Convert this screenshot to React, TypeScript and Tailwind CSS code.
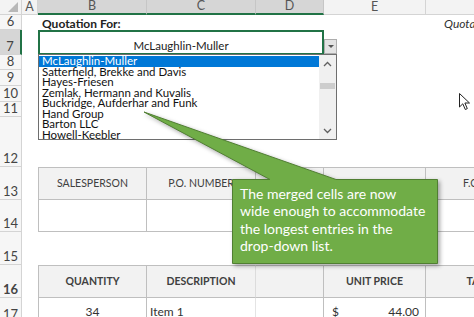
import React from 'react';

const font = { fontFamily: 'Lato, "Open Sans", sans-serif' };

const items = [
    'McLaughlin-Muller',
    'Satterfield, Brekke and Davis',
    'Hayes-Friesen',
    'Zemlak, Hermann and Kuvalis',
    'Buckridge, Aufderhar and Funk',
    'Hand Group',
    'Barton LLC',
    'Howell-Keebler',
];

function RowNum({ n, selected }: { n: string; selected?: boolean }) {
    return (
        <div
            className={`${selected
                ? 'bg-[#d6d6d6] border-r-2 border-r-[#217346]'
                : 'bg-[#f6f6f6] border-r border-r-[#d4d4d4]'
                } border-b border-b-[#d4d4d4] flex items-end justify-center text-[13px] leading-none pb-[1px] text-[#444]`}
        >
            {n}
        </div>
    );
}

export default function App() {
    return (
        <div className="relative w-[474px] h-[317px] overflow-hidden bg-white text-[#333]" style={font}>
            {/* column headers */}
            <div className="grid grid-cols-[22px_16px_109px_109px_68px_102px_102px] h-[15px] bg-[#f3f3f3] text-[12.5px] leading-none text-[#555]">
                <div className="border-r border-b border-[#d4d4d4] flex items-end justify-end pr-[3px] pb-[2px]">
                    <div className="w-0 h-0 border-l-[10px] border-l-transparent border-b-[10px] border-b-[#b8b8b8]" />
                </div>
                <div className="border-r border-b border-[#d4d4d4] flex items-center justify-center">A</div>
                <div className="border-r border-[#c6c6c6] border-b-2 border-b-[#217346] bg-[#d6d6d6] flex items-center justify-center">B</div>
                <div className="border-r border-[#c6c6c6] border-b-2 border-b-[#217346] bg-[#d6d6d6] flex items-center justify-center">C</div>
                <div className="border-r border-[#c6c6c6] border-b-2 border-b-[#217346] bg-[#d6d6d6] flex items-center justify-center">D</div>
                <div className="border-r border-b border-[#d4d4d4] flex items-center justify-center">E</div>
                <div className="border-r border-b border-[#d4d4d4]" />
            </div>

            {/* row 6 */}
            <div className="grid grid-cols-[22px_16px_109px_109px_68px_102px_102px] h-[15px]">
                <RowNum n="6" />
                <div />
                <div className="flex items-end pl-[4px] text-[12px] leading-none font-bold text-[#222] whitespace-nowrap">Quotation For:</div>
                <div />
                <div />
                <div />
                <div className="flex items-end pl-[18px] text-[12px] leading-none italic text-[#333] whitespace-nowrap">Quotation #</div>
            </div>

            {/* row 7 */}
            <div className="grid grid-cols-[22px_16px_109px_109px_68px_102px_102px] h-[25px]">
                <RowNum n="7" selected />
                <div />
                <div className="col-span-3 border-2 border-[#217346] flex items-end justify-center pb-[2px] text-[11.5px] leading-none text-[#222]">
                    McLaughlin-Muller
                </div>
                <div />
                <div />
            </div>

            {[
                ['8', 'h-[15px]'],
                ['9', 'h-[16px]'],
                ['10', 'h-[16px]'],
                ['11', 'h-[15px]'],
                ['12', 'h-[50px]'],
            ].map(([n, h]) => (
                <div key={n} className={`grid grid-cols-[22px_16px_109px_109px_68px_102px_102px] ${h}`}>
                    <RowNum n={n} />
                </div>
            ))}

            {/* row 13 - order info header */}
            <div className="grid grid-cols-[22px_16px_109px_109px_68px_102px_102px] h-[33px] text-[10.5px] text-[#404040]">
                <RowNum n="13" />
                <div />
                <div className="border border-[#bfbfbf] bg-[#f2f2f2] flex items-center justify-center">SALESPERSON</div>
                <div className="border-y border-r border-[#bfbfbf] bg-[#f2f2f2] flex items-center justify-center whitespace-nowrap">P.O. NUMBER</div>
                <div className="border-y border-r border-[#bfbfbf] bg-[#f2f2f2]" />
                <div className="border-y border-r border-[#bfbfbf] bg-[#f2f2f2]" />
                <div className="border-y border-r border-[#bfbfbf] bg-[#f2f2f2] flex items-center justify-center">F.O.B.</div>
            </div>

            {/* row 14 */}
            <div className="grid grid-cols-[22px_16px_109px_109px_68px_102px_102px] h-[32px]">
                <RowNum n="14" />
                <div />
                <div className="border-x border-b border-[#bfbfbf]" />
                <div className="border-r border-b border-[#bfbfbf]" />
                <div className="border-r border-b border-[#bfbfbf]" />
                <div className="border-r border-b border-[#bfbfbf]" />
                <div className="border-r border-b border-[#bfbfbf]" />
            </div>

            {/* row 15 */}
            <div className="grid grid-cols-[22px_16px_109px_109px_68px_102px_102px] h-[33px]">
                <RowNum n="15" />
            </div>

            {/* row 16 - items header */}
            <div className="grid grid-cols-[22px_16px_109px_109px_68px_102px_102px] h-[33px] text-[10.5px] font-bold text-[#404040]">
                <RowNum n="16" />
                <div />
                <div className="border border-[#bfbfbf] bg-[#f2f2f2] flex items-center justify-center">QUANTITY</div>
                <div className="border-y border-r border-y-[#bfbfbf] border-r-[#dcdcdc] bg-[#f2f2f2] flex items-center justify-center">DESCRIPTION</div>
                <div className="border-y border-r border-[#bfbfbf] bg-[#f2f2f2]" />
                <div className="border-y border-r border-[#bfbfbf] bg-[#f2f2f2] flex items-center justify-center">UNIT PRICE</div>
                <div className="border-y border-r border-[#bfbfbf] bg-[#f2f2f2] flex items-center justify-center">TAX</div>
            </div>

            {/* row 17 */}
            <div className="grid grid-cols-[22px_16px_109px_109px_68px_102px_102px] h-[25px] text-[12px] text-[#333]">
                <RowNum n="17" />
                <div />
                <div className="border-x border-b border-[#bfbfbf] flex items-center justify-center pt-[4px]">34</div>
                <div className="border-r border-b border-r-[#e4e4e4] border-b-[#bfbfbf] flex items-center pl-[3px] pt-[4px]">Item 1</div>
                <div className="border-r border-b border-[#bfbfbf]" />
                <div className="border-r border-b border-[#bfbfbf] flex items-center justify-between pl-[8px] pr-[6px] pt-[4px]">
                    <span>$</span>
                    <span>44.00</span>
                </div>
                <div className="border-r border-b border-[#bfbfbf]" />
            </div>

            {/* dropdown arrow button */}
            <div className="absolute left-[324px] top-[39px] w-[13px] h-[15px] bg-[#e3e3e3] border border-[#adadad] flex items-center justify-center">
                <div className="w-0 h-0 border-x-[3px] border-x-transparent border-t-[3px] border-t-[#555]" />
            </div>

            {/* dropdown list */}
            <div className="absolute left-[38px] top-[54px] w-[299px] h-[86px] border border-[#6e6e6e] bg-white flex">
                <div className="flex-1 flex flex-col pt-[1px]">
                    {items.map((it, i) => (
                        <div
                            key={it}
                            className={`${i === 0 ? 'bg-[#0078d7] text-white' : 'text-[#111]'} h-[10.5px] leading-[10.5px] text-[11.5px] pl-[3px] whitespace-nowrap`}
                        >
                            {it}
                        </div>
                    ))}
                </div>
                <div className="w-[17px] bg-[#f0f0f0] relative">
                    <svg className="absolute left-[4px] top-[6px]" width="9" height="6" viewBox="0 0 9 6">
                        <path d="M1 5 L4.5 1.5 L8 5" fill="none" stroke="#606060" strokeWidth="1.3" />
                    </svg>
                    <div className="absolute left-[1px] top-[28px] w-[15px] h-[6px] bg-[#cdcdcd]" />
                    <svg className="absolute left-[4px] top-[73px]" width="9" height="6" viewBox="0 0 9 6">
                        <path d="M1 1 L4.5 4.5 L8 1" fill="none" stroke="#606060" strokeWidth="1.3" />
                    </svg>
                </div>
            </div>

            {/* callout shape */}
            <svg className="absolute left-0 top-0 drop-shadow-[2px_2px_2px_rgba(0,0,0,0.35)]" width="474" height="317" viewBox="0 0 474 317">
                <path
                    d="M232.5 179.5 L270 179.5 L144 112 L336 179.5 L437.5 179.5 L437.5 263.5 L232.5 263.5 Z"
                    fill="#70ad47"
                    stroke="#507e32"
                    strokeWidth="1"
                />
            </svg>
            <div className="absolute left-[240px] top-[185px] text-[14px] leading-[17.3px] text-white whitespace-nowrap">
                The merged cells are now<br />
                wide enough to accommodate<br />
                the longest entries in the<br />
                drop-down list.
            </div>

            {/* mouse cursor */}
            <svg className="absolute left-[459px] top-[93px]" width="12" height="18" viewBox="0 0 12 18">
                <path d="M0.5 0.5 L0.5 14 L3.8 10.8 L6.3 16.5 L8.3 15.6 L5.9 10 L10.5 10 Z" fill="white" stroke="#222" strokeWidth="1" />
            </svg>
        </div>
    );
}
